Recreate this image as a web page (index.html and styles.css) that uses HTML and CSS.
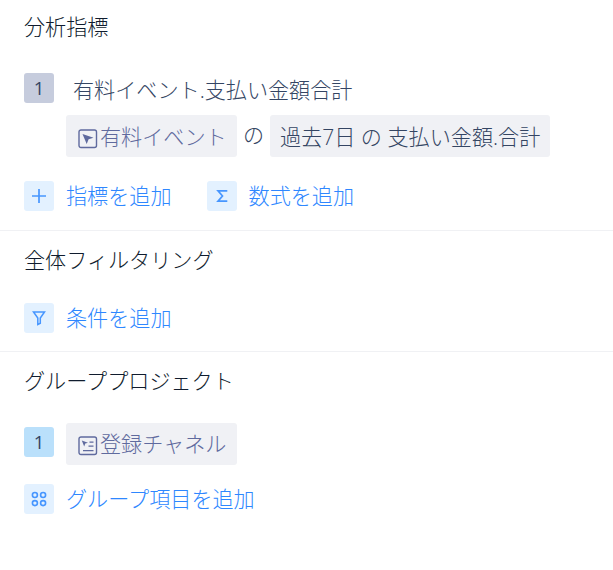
FILE: index.html
```html
<!DOCTYPE html>
<html lang="ja">
<head>
    <meta charset="UTF-8">
    <meta name="viewport" content="width=device-width, initial-scale=1">
    <title>分析指標</title>
    <link rel="stylesheet" href="styles.css">
</head>
<body>
<section class="panel metrics">
    <h2 class="title">分析指標</h2>
    <div class="metric">
        <span class="num">1</span>
        <div class="metricBody">
            <div class="metricName">有料イベント.支払い金額合計</div>
            <div class="chips">
                <span class="chip event">
                    <svg class="chipIcon" width="20" height="20" viewBox="0 0 20 20">
                        <rect x="1" y="1" width="17.5" height="17.5" rx="2" fill="none" stroke="currentColor" stroke-width="1.4"/>
                        <path d="M4.5 5L15.5 8.7L10.6 10.2L8.7 15Z" fill="currentColor"/>
                    </svg>
                    <span>有料イベント</span>
                </span>
                <span class="of">の</span>
                <span class="chip">過去7日 の 支払い金額.合計</span>
            </div>
        </div>
    </div>
    <div class="actions">
        <a class="add">
            <span class="addIcon">
                <svg width="30" height="30" viewBox="0 0 30 30">
                    <path d="M15 8V22M8 15H22" fill="none" stroke="currentColor" stroke-width="1.7"/>
                </svg>
            </span>
            <span>指標を追加</span>
        </a>
        <a class="add">
            <span class="addIcon">
                <svg width="30" height="30" viewBox="0 0 30 30">
                    <path d="M20.3 9.8H11L15.5 15L11 20.2H20.3" fill="none" stroke="currentColor" stroke-width="1.7"/>
                </svg>
            </span>
            <span>数式を追加</span>
        </a>
    </div>
</section>

<section class="panel filters">
    <h2 class="title">全体フィルタリング</h2>
    <div class="actions">
        <a class="add">
            <span class="addIcon">
                <svg width="30" height="30" viewBox="0 0 30 30">
                    <path d="M9.5 9H20.5L16.3 15V20.2L13.8 21.5V15Z" fill="none" stroke="currentColor" stroke-width="1.5"/>
                </svg>
            </span>
            <span>条件を追加</span>
        </a>
    </div>
</section>

<section class="panel groups">
    <h2 class="title">グループプロジェクト</h2>
    <div class="group">
        <span class="num blue">1</span>
        <span class="chip event">
            <svg class="chipIcon" width="20" height="20" viewBox="0 0 20 20">
                <rect x="1" y="1" width="17.5" height="17.5" rx="2" fill="none" stroke="currentColor" stroke-width="1.4"/>
                <path d="M3.8 4.5L10 6.7L7.3 7.5L6.2 10.5Z" fill="currentColor"/>
                <path d="M11.5 6.1H15.5M10.5 10.1H15.5M5 14.6H15.5" fill="none" stroke="currentColor" stroke-width="1.4"/>
            </svg>
            <span>登録チャネル</span>
        </span>
    </div>
    <div class="actions">
        <a class="add">
            <span class="addIcon">
                <svg width="30" height="30" viewBox="0 0 30 30">
                    <g fill="none" stroke="currentColor" stroke-width="1.6">
                        <circle cx="10.9" cy="11" r="2.5"/>
                        <circle cx="19.1" cy="11" r="2.5"/>
                        <circle cx="10.9" cy="19.1" r="2.5"/>
                        <circle cx="19.1" cy="19.1" r="2.5"/>
                    </g>
                </svg>
            </span>
            <span>グループ項目を追加</span>
        </a>
    </div>
</section>
</body>
</html>
```
FILE: styles.css
```css
*{
    box-sizing:border-box;
}
body{
    margin:0;
    background-color:#fff;
    color:#344563;
    font-family:"Open Sans","Noto Sans CJK JP",sans-serif;
    font-size:21.12px;
    font-weight:300;
    line-height:30px;
}
.panel{
    padding:12px 24px 0;
}
.metrics{
    height:231px;
    border-bottom:1px solid #f0f1f4;
}
.filters{
    height:121px;
    padding-top:14px;
    border-bottom:1px solid #f0f1f4;
}
.groups{
    padding-top:14px;
}
.title{
    margin:0;
    font-size:21.12px;
    font-weight:300;
    color:#101c2e;
}
.metric{
    display:flex;
    margin-top:31px;
}
.num{
    width:30px;
    height:30px;
    flex:none;
    border-radius:3px;
    background-color:#c6ccdd;
    font-size:18.5px;
    font-weight:400;
    line-height:29px;
    text-align:center;
}
.num.blue{
    background-color:#bae0fb;
}
.metricBody{
    margin-left:12px;
}
.metricName{
    height:42px;
    padding:2px 0 0 7px;
}
.chips{
    display:flex;
    align-items:center;
}
.chip{
    display:flex;
    align-items:center;
    height:42px;
    padding:2px 10px 0;
    border-radius:3px;
    background-color:#f0f1f5;
    white-space:nowrap;
}
.event{
    width:171px;
    padding-left:11.5px;
    color:#5f6a9e;
}
.chipIcon{
    flex:none;
    margin:3px 2.5px 0 0;
}
.of{
    width:33px;
    line-height:26px;
    padding-bottom:2px;
    text-align:center;
}
.actions{
    display:flex;
    gap:35px;
    margin-top:24px;
}
.filters .actions{
    margin-top:28px;
}
.groups .actions{
    margin-top:19px;
}
.add{
    display:flex;
    gap:12px;
    height:30px;
    line-height:30px;
    color:#2e87ff;
}
.addIcon{
    width:30px;
    height:30px;
    border-radius:3px;
    background-color:#e3f1ff;
    color:#4796ff;
}
.addIcon svg{
    display:block;
}
.group{
    display:flex;
    gap:12px;
    margin-top:27px;
}
.group .num{
    margin-top:4px;
}
.group .chip{
    padding-top:0;
}
```
